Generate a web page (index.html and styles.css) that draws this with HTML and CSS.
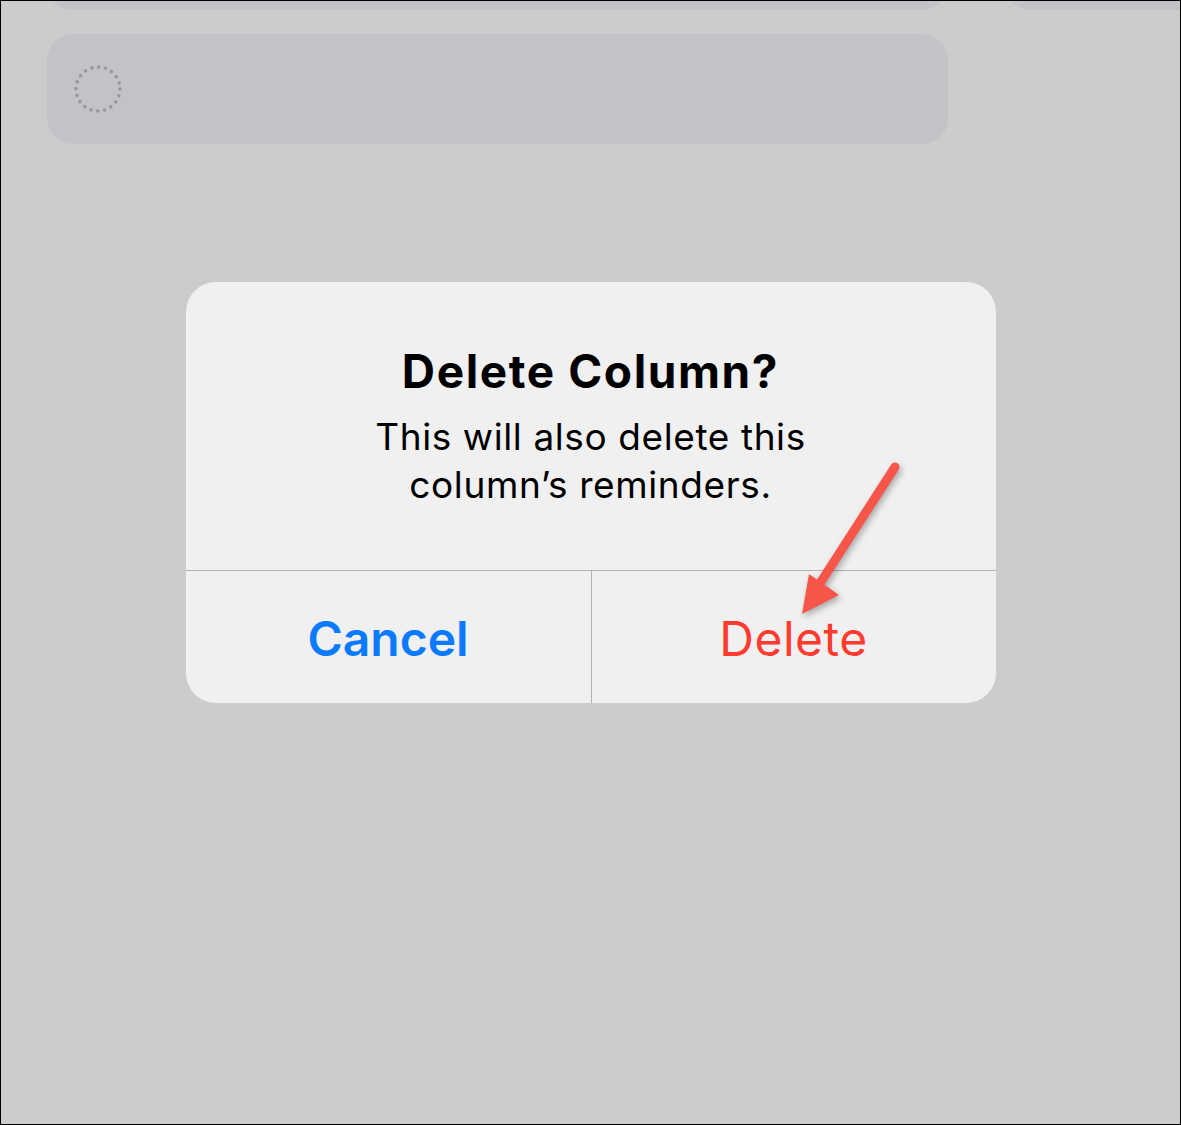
FILE: index.html
```html
<!DOCTYPE html>
<html>
<head>
<meta charset="utf-8">
<link rel="stylesheet" href="styles.css">
</head>
<body>
<div class="frame">
  <div class="row-top">
    <div class="card"></div>
    <div class="card"></div>
  </div>
  <div class="card card-task">
    <svg class="ring" width="50" height="50" viewBox="0 0 50 50">
      <circle cx="25" cy="25" r="22" fill="none" stroke="#97969b" stroke-width="3.6" stroke-linecap="round" stroke-dasharray="0 6.9115"/>
    </svg>
  </div>
  <div class="alert">
    <div class="alert-body">
      <div class="alert-title">Delete Column?</div>
      <div class="alert-msg">This will also delete this<br>column’s reminders.</div>
    </div>
    <div class="alert-actions">
      <div class="btn btn-cancel">Cancel</div>
      <div class="btn btn-delete">Delete</div>
    </div>
    <svg class="arrow" width="120" height="170" viewBox="0 0 120 170">
      <line x1="105" y1="13" x2="27" y2="134" stroke="#f6554a" stroke-width="9" stroke-linecap="round"/>
      <polygon points="12,160 19,120 49,141" fill="#f6554a"/>
    </svg>
  </div>
</div>
</body>
</html>
```

FILE: styles.css
```css
html, body {
  margin: 0;
  padding: 0;
}
body {
  font-family: Inter, "Noto Sans", sans-serif;
}
.frame {
  width: 1181px;
  height: 1125px;
  box-sizing: border-box;
  border: 1px solid #000;
  background: #cccccc;
  overflow: hidden;
}
.row-top {
  display: flex;
  gap: 57px;
  margin-top: -101px;
  padding-left: 46px;
}
.card {
  flex-shrink: 0;
  width: 901px;
  height: 110px;
  border-radius: 26px;
  background: #c3c2c7;
}
.card-task {
  margin: 24px 0 0 46px;
  display: flex;
  align-items: center;
  padding-left: 26px;
  box-sizing: border-box;
}
.ring {
  display: block;
}
.alert {
  position: relative;
  width: 810px;
  margin: 138px auto 0;
  background: #f0f0f0;
  border-radius: 30px;
  overflow: visible;
}
.alert-body {
  height: 289px;
  box-sizing: border-box;
  padding-top: 62px;
  text-align: center;
  border-bottom: 1px solid #b3b3b3;
}
.alert-title {
  font-size: 46px;
  font-weight: 700;
  line-height: 54px;
  color: #000;
  letter-spacing: 1.6px;
}
.alert-msg {
  margin-top: 15px;
  font-size: 37px;
  line-height: 48px;
  color: #000;
  letter-spacing: 0.6px;
}
.alert-actions {
  display: flex;
  height: 132px;
}
.btn {
  flex: 1;
  display: flex;
  align-items: center;
  justify-content: center;
  font-size: 48px;
  padding-top: 2px;
  box-sizing: border-box;
}
.btn-cancel {
  flex: 0 0 406px;
  color: #0a7aff;
  font-weight: 600;
  border-right: 1px solid #b3b3b3;
}
.btn-delete {
  color: #ff3b30;
  letter-spacing: 0.5px;
}
.arrow {
  position: absolute;
  left: 604px;
  top: 172px;
  filter: drop-shadow(2px 3px 3px rgba(0,0,0,0.3));
}
```
